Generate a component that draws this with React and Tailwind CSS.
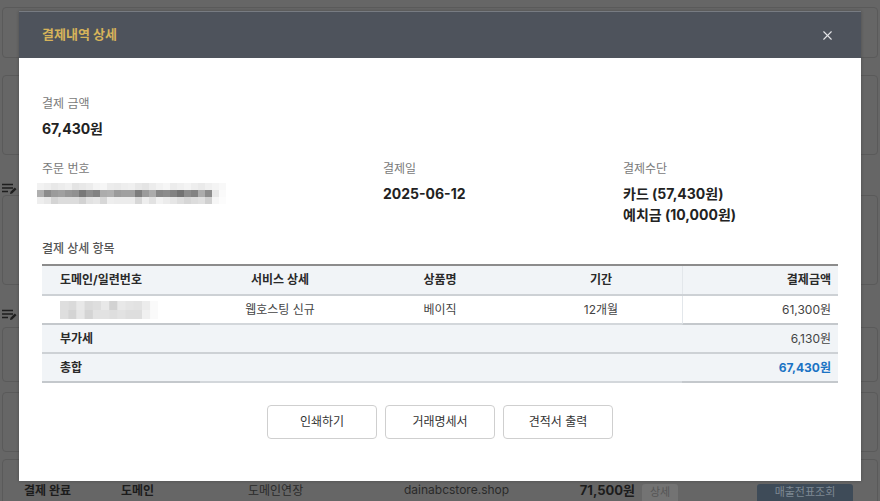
import { X } from "lucide-react";

const FONT = { fontFamily: 'Inter, "Noto Sans CJK KR", sans-serif' };

// pixelated (blurred) order number
const orderMosaic = [
  [242, 238, 232, 236, 240, 228, 232, 236, 244, 246, 236, 234, 238, 240, 232, 228, 236, 242, 246, 236, 240, 244, 238, 234, 240, 244, 248],
  [175, 140, 155, 160, 150, 145, 120, 140, 130, 172, 175, 155, 160, 160, 125, 155, 172, 135, 140, 130, 115, 140, 130, 172, 140, 232, 250],
  [238, 232, 212, 220, 220, 220, 210, 226, 230, 215, 238, 236, 236, 236, 215, 238, 226, 242, 236, 230, 222, 214, 220, 224, 208, 246, 252],
];

const domainMosaic = [
  [222, 218, 232, 218, 222, 232, 210, 232, 228, 226, 236, 250],
  [222, 212, 230, 212, 226, 226, 222, 226, 222, 222, 240, 250],
];

function Mosaic({ data, cell, w, h }) {
  return (
    <svg width={w} height={h} viewBox={`0 0 ${w} ${h}`}>
      {data.map((row, r) =>
        row.map((v, c) => (
          <rect
            key={`${r}-${c}`}
            x={c * cell[0]}
            y={r * cell[1]}
            width={cell[0] + 0.5}
            height={cell[1] + 0.5}
            fill={`rgb(${v},${v},${v})`}
          />
        ))
      )}
    </svg>
  );
}

function EditNoteIcon() {
  return (
    <svg width="16" height="12" viewBox="0 0 16 12" fill="none">
      <path d="M1 1.5h11M1 5h11M1 8.5h6" stroke="#1e1e1e" strokeWidth="1.6" />
      <path d="M9 11l.5-2.2 4.3-4.3 1.7 1.7-4.3 4.3z" fill="#1e1e1e" />
    </svg>
  );
}

function BgCard({ className = "", children }) {
  return (
    <div className={`mx-[2px] rounded-[4px] border border-[#5a5a5a] ${className}`}>
      {children}
    </div>
  );
}

function Background() {
  return (
    <div className="flex flex-col pt-[7px]">
      <BgCard className="h-[51px]" />
      <BgCard className="h-[80px] mt-[17px]" />
      <div className="h-[40px] flex items-center pl-[1px] pt-[28px]">
        <EditNoteIcon />
      </div>
      <BgCard className="h-[90px]" />
      <div className="h-[42px] flex items-center pl-[1px] pt-[18px]">
        <EditNoteIcon />
      </div>
      <BgCard className="h-[55px]" />
      <BgCard className="h-[60px] mt-[10px]" />
      <BgCard className="h-[60px] mt-[7px]">
        <div className="flex items-end h-[17px] mt-[24px] text-[12px] text-[#1c1c1c]">
          <span className="w-[118px] pl-[21px] font-bold pb-[1px]">결제 완료</span>
          <span className="w-[127px] font-bold pb-[1px]">도메인</span>
          <span className="w-[156px] text-[#2a2a2a] pb-[1px]">도메인연장</span>
          <span className="w-[231px] flex justify-between pb-[1px]">
            <span className="text-[#2a2a2a]">dainabcstore.shop</span>
            <span className="font-bold text-[13px]">71,500원</span>
          </span>
          <span className="ml-[7px] w-[36px] h-[17px] bg-[#737373] rounded-t-[3px] text-[#555] text-[11px] flex items-center justify-center">
            상세
          </span>
          <span className="ml-[79px] w-[96px] h-[17px] bg-[#3e4b58] rounded-t-[3px] text-[#7d8893] text-[11px] flex items-center justify-center">
            매출전표조회
          </span>
        </div>
      </BgCard>
    </div>
  );
}

function Label({ children }) {
  return <p className="text-[12px] leading-[18px] text-[#7a7a7a]">{children}</p>;
}

function Value({ children, className = "" }) {
  return (
    <p className={`text-[14px] leading-[21px] font-bold text-[#222] ${className}`}>{children}</p>
  );
}

const COLS = "grid grid-cols-[158px_160px_160px_162px_156px]";

function PaymentTable() {
  return (
    <div className="mt-[6px] border-t-2 border-[#8c8c8c] text-[12px]">
      {/* header */}
      <div className={`${COLS} h-[30px] bg-[#f1f4f7] border-b-2 border-[#cdd1d5] font-bold text-[#2a2a2a]`}>
        <div className="pl-[18px] flex items-center">도메인/일련번호</div>
        <div className="flex items-center justify-center">서비스 상세</div>
        <div className="flex items-center justify-center">상품명</div>
        <div className="flex items-center justify-center">기간</div>
        <div className="flex items-center justify-end pr-[7px] border-l border-[#e3e7eb]">결제금액</div>
      </div>
      {/* item */}
      <div className={`${COLS} h-[29px] bg-white text-[#444]`}>
        <div className="pl-[18px] flex items-center border-b-2 border-[#c4c8cc]">
          <Mosaic data={domainMosaic} cell={[8.2, 9]} w={98} h={18} />
        </div>
        <div className="flex items-center justify-center border-b-2 border-[#d3d7db]">웹호스팅 신규</div>
        <div className="flex items-center justify-center border-b-2 border-[#d3d7db]">베이직</div>
        <div className="flex items-center justify-center border-b-2 border-[#d3d7db]">12개월</div>
        <div className="flex items-center justify-end pr-[7px] border-l border-[#e3e7eb] border-b-2 border-b-[#c4c8cc]">
          61,300원
        </div>
      </div>
      {/* vat */}
      <div className="flex items-center justify-between h-[29px] bg-[#f1f4f7] border-b-2 border-[#cdd1d5] pl-[18px] pr-[7px] text-[#2a2a2a]">
        <span className="font-bold">부가세</span>
        <span className="text-[#444]">6,130원</span>
      </div>
      {/* total */}
      <div className={`${COLS} h-[29px] bg-[#f1f4f7]`}>
        <div className="pl-[18px] flex items-center font-bold text-[#2a2a2a] border-b-2 border-[#c4c8cc]">총합</div>
        <div className="col-span-3 border-b-2 border-[#d3d7db]" />
        <div className="flex items-center justify-end pr-[7px] font-bold text-[#1a73c4] border-b-2 border-[#c4c8cc]">
          67,430원
        </div>
      </div>
    </div>
  );
}

function Modal() {
  return (
    <div className="absolute left-[19px] top-[11px] w-[842px] bg-white shadow-[0_0_3px_rgba(0,0,0,0.25)]">
      <header className="h-[47px] bg-[#4e535c] border-t border-[#777b82] flex items-center justify-between pl-[23px] pr-[26px]">
        <h2 className="text-[13px] font-bold text-[#d6b35a]">결제내역 상세</h2>
        <X size={15} strokeWidth={1.8} className="text-[#e4e5e7]" />
      </header>

      <div className="px-[23px] pt-[37px] pb-[42px]">
        <Label>결제 금액</Label>
        <Value className="mt-[5px]">67,430원</Value>

        <div className="grid grid-cols-[341px_240px_1fr] mt-[21px]">
          <div>
            <Label>주문 번호</Label>
            <div className="mt-[5px] -ml-[5px]">
              <Mosaic data={orderMosaic} cell={[7, 7]} w={189} h={21} />
            </div>
          </div>
          <div>
            <Label>결제일</Label>
            <Value className="mt-[5px]">2025-06-12</Value>
          </div>
          <div>
            <Label>결제수단</Label>
            <Value className="mt-[5px]">카드 (57,430원)</Value>
            <Value>예치금 (10,000원)</Value>
          </div>
        </div>

        <p className="mt-[15px] text-[12px] leading-[18px] font-medium text-[#555]">결제 상세 항목</p>

        <PaymentTable />

        <div className="mt-[22px] flex justify-center gap-[8px]">
          {["인쇄하기", "거래명세서", "견적서 출력"].map((t) => (
            <button
              key={t}
              className="w-[110px] h-[34px] rounded-[4px] border border-[#cfcfcf] bg-white text-[12px] text-[#333]"
            >
              {t}
            </button>
          ))}
        </div>
      </div>
    </div>
  );
}

export default function App() {
  return (
    <div style={FONT} className="relative w-[880px] h-[501px] overflow-hidden bg-[#666666]">
      <Background />
      <Modal />
    </div>
  );
}
